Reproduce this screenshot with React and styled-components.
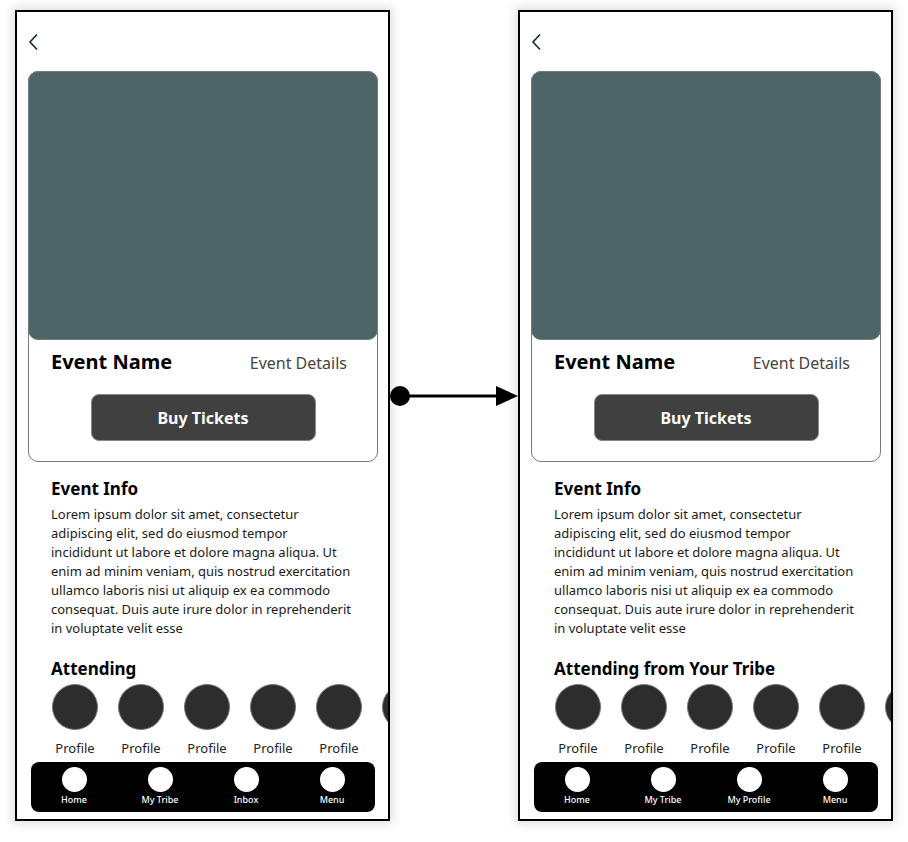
import React from 'react';
import styled, { createGlobalStyle } from 'styled-components';

const GlobalStyle = createGlobalStyle`
  html, body {
    margin: 0;
    padding: 0;
    background: #ffffff;
  }
  body {
    font-family: "Noto Sans", "Open Sans", Arial, sans-serif;
  }
`;

const Canvas = styled.div`
  display: flex;
  align-items: flex-start;
  padding: 10px 0 20px 15px;
`;

const Phone = styled.div`
  position: relative;
  width: 375px;
  height: 811px;
  box-sizing: border-box;
  border: 2px solid #000;
  background: #fff;
  box-shadow: 0 0 10px 3px rgba(0, 0, 0, 0.12);
  padding: 0 10px 0 11px;
  display: flex;
  flex-direction: column;
  overflow: hidden;
`;

const TopBar = styled.div`
  height: 59px;
  display: flex;
  align-items: center;
`;

const BackButton = styled.svg`
  width: 12px;
  height: 18px;
`;

const Card = styled.div`
  height: 391px;
  box-sizing: border-box;
  border: 1px solid #7a7a7a;
  border-radius: 10px;
  display: flex;
  flex-direction: column;
`;

const Cover = styled.div`
  height: 267px;
  margin: -1px -1px 0 -1px;
  border: 1px solid #6f7c7b;
  border-radius: 10px;
  background: #4d6665;
`;

const TitleRow = styled.div`
  display: flex;
  justify-content: space-between;
  align-items: baseline;
  padding: 8px 30px 0 22px;
`;

const EventName = styled.div`
  font-size: 20px;
  font-weight: 700;
  color: #000;
`;

const EventDetails = styled.div`
  font-size: 16px;
  color: #444;
`;

const BuyButton = styled.button`
  align-self: center;
  width: 225px;
  height: 47px;
  margin-top: 19px;
  border: 1px solid #888;
  border-radius: 8px;
  background: #404040;
  color: #fff;
  font-family: inherit;
  font-size: 16px;
  font-weight: 700;
`;

const Section = styled.div`
  padding: 0 20px 0 23px;
`;

const Heading = styled.div`
  font-size: 17px;
  font-weight: 700;
  color: #000;
  line-height: 24px;
  margin-top: ${(p) => p.$top}px;
`;

const Body = styled.p`
  margin: 4px 0 0;
  font-size: 13px;
  line-height: 19px;
  color: #1a1a1a;
`;

const BodyLine = styled.span`
  display: block;
  white-space: nowrap;
`;

const ProfileRow = styled.div`
  display: flex;
  gap: 20px;
  padding-left: 24px;
  margin-top: 3px;
`;

const ProfileItem = styled.div`
  flex: 0 0 46px;
  display: flex;
  flex-direction: column;
  align-items: center;
`;

const Avatar = styled.div`
  width: 46px;
  height: 46px;
  box-sizing: border-box;
  border-radius: 50%;
  background: #2d2d2d;
  border: 1px solid #777;
`;

const ProfileLabel = styled.div`
  margin-top: 9px;
  font-size: 13px;
  line-height: 18px;
  color: #222;
  white-space: nowrap;
`;

const NavBar = styled.div`
  margin: 5px 3px 0;
  height: 50px;
  border-radius: 8px;
  background: #000;
  display: grid;
  grid-template-columns: repeat(4, 1fr);
`;

const NavItem = styled.div`
  display: flex;
  flex-direction: column;
  align-items: center;
  padding-top: 5px;
`;

const NavDot = styled.div`
  width: 25px;
  height: 25px;
  border-radius: 50%;
  background: #fff;
`;

const NavLabel = styled.div`
  margin-top: 2px;
  font-size: 9px;
  font-weight: 500;
  line-height: 12px;
  color: #fff;
  white-space: nowrap;
`;

const Connector = styled.svg`
  width: 128px;
  height: 40px;
  margin-top: 366px;
  flex: 0 0 128px;
`;

const loremLines = [
  'Lorem ipsum dolor sit amet, consectetur',
  'adipiscing elit, sed do eiusmod tempor',
  'incididunt ut labore et dolore magna aliqua. Ut',
  'enim ad minim veniam, quis nostrud exercitation',
  'ullamco laboris nisi ut aliquip ex ea commodo',
  'consequat. Duis aute irure dolor in reprehenderit',
  'in voluptate velit esse',
];

const Screen = ({ attendingTitle, navItems }) => (
  <Phone>
    <TopBar>
      <BackButton viewBox="0 0 12 18">
        <polyline points="9,1.5 2,9 9,16.5" fill="none" stroke="#1f2e2e" strokeWidth="1.7" />
      </BackButton>
    </TopBar>
    <Card>
      <Cover />
      <TitleRow>
        <EventName>Event Name</EventName>
        <EventDetails>Event Details</EventDetails>
      </TitleRow>
      <BuyButton>Buy Tickets</BuyButton>
    </Card>
    <Section>
      <Heading $top={15}>Event Info</Heading>
      <Body>
        {loremLines.map((line) => (
          <BodyLine key={line}>{line}</BodyLine>
        ))}
      </Body>
      <Heading $top={19}>{attendingTitle}</Heading>
    </Section>
    <ProfileRow>
      {[0, 1, 2, 3, 4, 5].map((i) => (
        <ProfileItem key={i}>
          <Avatar />
          {i < 5 && <ProfileLabel>Profile</ProfileLabel>}
        </ProfileItem>
      ))}
    </ProfileRow>
    <NavBar>
      {navItems.map((label) => (
        <NavItem key={label}>
          <NavDot />
          <NavLabel>{label}</NavLabel>
        </NavItem>
      ))}
    </NavBar>
  </Phone>
);

const App = () => (
  <>
    <GlobalStyle />
    <Canvas>
      <Screen attendingTitle="Attending" navItems={['Home', 'My Tribe', 'Inbox', 'Menu']} />
      <Connector viewBox="0 0 128 40">
        <circle cx="10" cy="20" r="10" fill="#000" />
        <line x1="10" y1="20" x2="110" y2="20" stroke="#000" strokeWidth="3" />
        <polygon points="106,10 128,20 106,30" fill="#000" />
      </Connector>
      <Screen
        attendingTitle="Attending from Your Tribe"
        navItems={['Home', 'My Tribe', 'My Profile', 'Menu']}
      />
    </Canvas>
  </>
);

export default App;
